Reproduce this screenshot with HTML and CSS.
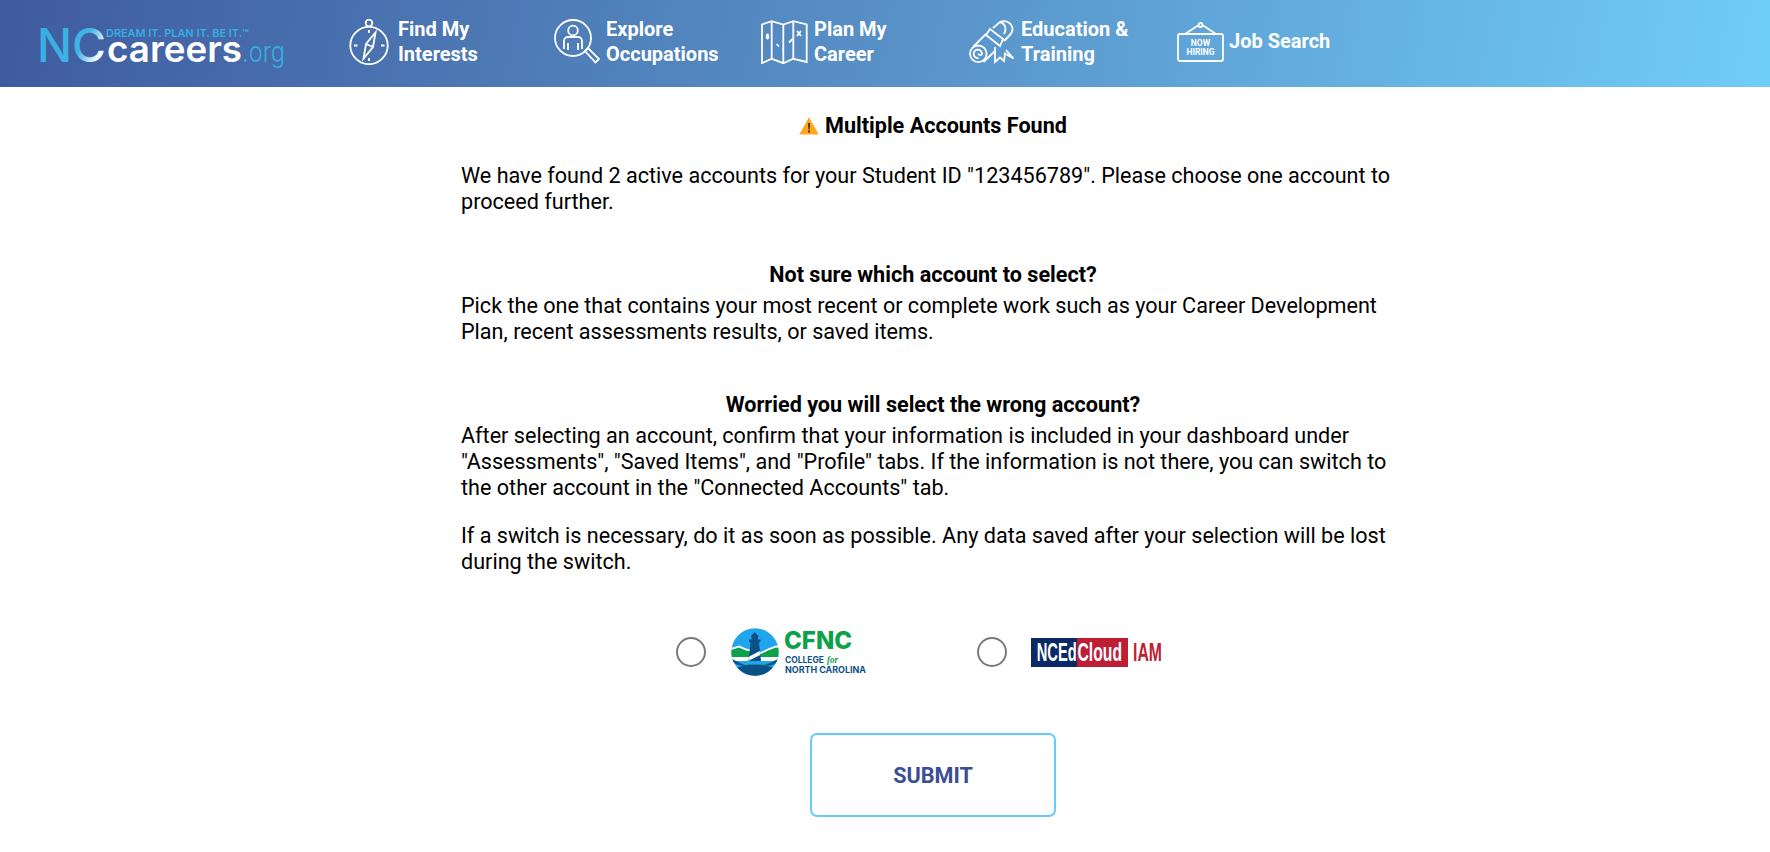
FILE: index.html
```html
<!DOCTYPE html>
<html lang="en">
<head>
<meta charset="utf-8">
<title>NCcareers.org</title>
<link rel="stylesheet" href="styles.css">
</head>
<body>
<header class="topbar">
  <a class="logo" href="#">
    <svg width="245" height="42" viewBox="0 0 245 42">
      <defs>
        <linearGradient id="ncfill" x1="0" y1="0" x2="1" y2="0.45">
          <stop offset="0" stop-color="#35aee2"/>
          <stop offset="0.74" stop-color="#3fb3e6"/>
          <stop offset="1" stop-color="#eef8fd"/>
        </linearGradient>
      </defs>
      <text class="lg-nc" x="-3" y="33.500" textLength="69" lengthAdjust="spacingAndGlyphs" fill="url(#ncfill)">NC</text>
      <text class="lg-tag" x="66" y="8.500" textLength="143" lengthAdjust="spacingAndGlyphs">DREAM IT. PLAN IT. BE IT.™</text>
      <text class="lg-car" x="67" y="33.500" textLength="135" lengthAdjust="spacingAndGlyphs">careers</text>
      <text class="lg-org" x="202" y="33.500" textLength="43" lengthAdjust="spacingAndGlyphs">.org</text>
    </svg>
  </a>
  <nav class="nav">
    <a class="nav-item first-item" href="#">
      <svg class="ic" width="40" height="46" viewBox="0 0 40 46">
        <circle cx="20" cy="26.500" r="18.700"/><circle cx="20" cy="4" r="3.300"/>
        <path d="M26.500 13.500 24 28 14.500 39.500 17 25zM17 25l7 3"/>
        <path d="M20 11v3M20 39v3M5 26.500h3.500M32 26.500h3.500"/>
      </svg>
      <span class="nav-label">Find My<br>Interests</span>
    </a>
    <a class="nav-item second-item" href="#">
      <svg class="ic" width="46" height="46" viewBox="0 0 46 46">
        <circle cx="19" cy="19" r="18"/><circle cx="19" cy="11.500" r="4.800"/>
        <path d="M10 30V22a4 4 0 0 1 4-4h10a4 4 0 0 1 4 4v8M14 24v7M24 24v7"/>
        <path d="M31 32l3-3 11 11-3.500 3.500z"/>
      </svg>
      <span class="nav-label">Explore<br>Occupations</span>
    </a>
    <a class="nav-item" href="#">
      <svg class="ic" width="47" height="44" viewBox="0 0 47 44">
        <path d="M1 4.500 10.700 1.200 22.300 4.500 32.300 1.200 45.700 4.500V42L32.300 38.800 22.300 43.200 10.700 38.800 1 43.200z"/>
        <path d="M10.700 1.200V38.800M22.300 4.500V43.200M32.300 1.200V38.800"/>
        <ellipse class="solid" cx="6.500" cy="16.500" rx="1.700" ry="3"/>
        <path d="M15.700 24 18 26.500M21.500 29h1.500M28 22.500 31.500 19M36 11l4 5M40 11l-4 5"/>
      </svg>
      <span class="nav-label">Plan My<br>Career</span>
    </a>
    <a class="nav-item" href="#">
      <svg class="ic" width="46" height="44" viewBox="0 0 46 44">
        <circle cx="9.300" cy="33.800" r="8.300"/>
        <path d="M9.500 38a4.200 4.200 0 1 1 3.500-4.500c0 2-3.500 2.200-3.800 0"/>
        <path d="M4 27 17 14M14.500 42 26 31"/>
        <path d="M17 15 21 9l13 10-3 7zM24 8 31 2C36 0 42 2 43.500 8 44 12 42 14 40 16L35 21M31 2C36 3 38 9 35 14"/>
        <path d="M26 27V42L31 37.500 35 41 36 33.500 44.500 38.500 37 30"/>
      </svg>
      <span class="nav-label">Education &amp;<br>Training</span>
    </a>
    <a class="nav-item" href="#">
      <svg class="ic hire" width="47" height="40" viewBox="0 0 47 40">
        <rect x="1" y="12" width="45" height="27" rx="2"/>
        <path d="M8 12 21 3.500M39 12 26 3.500"/><circle cx="23.500" cy="3" r="2"/>
        <text class="hire-t" x="23.500" y="24">NOW</text>
        <text class="hire-t" x="23.500" y="33">HIRING</text>
      </svg>
      <span class="nav-label">Job Search</span>
    </a>
  </nav>
</header>

<main class="content">
  <h1 class="title">
    <svg class="warn" width="20" height="18" viewBox="0 0 20 18"><path d="M10 0.500 19.800 17.500H0.200z" fill="#ffa51f"/><path d="M9.100 6h1.800l-.3 6.500H9.400zM9.100 13.500h1.800v1.900H9.100z" fill="#30210a"/></svg>
    Multiple Accounts Found
  </h1>
  <p class="para first">We have found 2 active accounts for your Student ID "123456789". Please choose one account to proceed further.</p>

  <h2 class="sub">Not sure which account to select?</h2>
  <p class="para">Pick the one that contains your most recent or complete work such as your Career Development Plan, recent assessments results, or saved items.</p>

  <h2 class="sub">Worried you will select the wrong account?</h2>
  <p class="para">After selecting an account, confirm that your information is included in your dashboard under "Assessments", "Saved Items", and "Profile" tabs. If the information is not there, you can switch to the other account in the "Connected Accounts" tab.</p>
  <p class="para gap">If a switch is necessary, do it as soon as possible. Any data saved after your selection will be lost during the switch.</p>

  <form class="choose">
    <div class="options">
      <label class="option opt-a">
        <input class="radio" type="radio" name="acct">
        <svg width="136" height="48" viewBox="0 0 136 48">
          <defs><clipPath id="disc"><circle cx="24" cy="24" r="23.700"/></clipPath></defs>
          <g clip-path="url(#disc)">
            <rect width="48" height="48" fill="#1fa5ee"/>
            <path d="M0 20 8 17.500 15 20.500 30 24 37 20.500 45 17.500 48 18V33H0z" fill="#fff"/>
            <path d="M0 22 8 19.500 15 22.500 30 26 37 22.500 45 19.500 48 20V29H0z" fill="#0da14b"/>
            <path d="M0 31q7 5 14 5.500 10 1 20-.5 8-1 14-5v3q-12 4-24 4T0 34z" fill="#0da14b"/>
            <path d="M1 31q10 5 14 7-8 0-12-3z" fill="#0b5186"/>
            <path d="M47 31q-10 5-14 7 8 0 12-3z" fill="#0b5186"/>
            <path d="M0 42q24-11 48 0v6H0z" fill="#0b5186"/>
            <path d="M19.500 14h8.500L30 33H17.500z" fill="#0b5186"/>
            <path d="M18.200 28.500 28.700 23 29.200 27 18 32.500z" fill="#fff"/>
            <path d="M18 11.500h11.500V14H18zM20.500 8.500H27v3h-6.500zM19.500 8.500 23.700 4 28 8.500z" fill="#0b5186"/>
          </g>
          <text class="cf-big" x="53" y="21">CFNC</text>
          <text class="cf-sm" x="54" y="35" textLength="39" lengthAdjust="spacingAndGlyphs">COLLEGE</text>
          <text class="cf-for" x="96" y="35" textLength="11" lengthAdjust="spacingAndGlyphs">for</text>
          <text class="cf-sm" x="54" y="45" textLength="81" lengthAdjust="spacingAndGlyphs">NORTH CAROLINA</text>
        </svg>
      </label>
      <label class="option opt-b">
        <input class="radio" type="radio" name="acct">
        <svg class="nced" width="131" height="29" viewBox="0 0 131 29">
          <rect width="46" height="29" fill="#0a2a66"/>
          <rect x="46" width="51" height="29" fill="#bd1e35"/>
          <text class="nc-t" x="5.700" y="22.700" textLength="40" lengthAdjust="spacingAndGlyphs">NCEd</text>
          <text class="nc-t" x="46.500" y="22.700" textLength="44.500" lengthAdjust="spacingAndGlyphs">Cloud</text>
          <text class="nc-t red" x="102" y="22.700" textLength="29" lengthAdjust="spacingAndGlyphs">IAM</text>
        </svg>
      </label>
    </div>
    <button class="submit" type="button">SUBMIT</button>
  </form>
</main>
</body>
</html>
```
FILE: styles.css
```css
* { box-sizing: border-box; }
html, body { margin: 0; padding: 0; }
body {
  background: #fff;
  color: #000;
  font-family: Roboto, "Liberation Sans", sans-serif;
  font-size: 21.600px;
  line-height: 26px;
  overflow: hidden;
}
.topbar {
  display: flex;
  align-items: center;
  height: 87px;
  padding: 0 0 4px 40px;
  background: linear-gradient(100deg, #3f5b9e 0%, #5a96cb 55%, #70cdf8 100%);
}
.logo { display: block; width: 245px; height: 42px; margin: 0 64px 0 0; position: relative; top: 7px; }
.logo svg { display: block; overflow: visible; }
.lg-nc { font-family: Inter, sans-serif; font-size: 47px; font-weight: 500; }
.lg-tag { font-family: Inter, sans-serif; font-size: 11px; font-weight: 600; fill: #35aee2; }
.lg-car { font-family: Inter, sans-serif; font-size: 36px; font-weight: 600; fill: #fff; }
.lg-org { font-family: Inter, sans-serif; font-size: 28px; font-weight: 300; fill: #35aee2; }
.nav { display: flex; }
.nav-item {
  display: flex;
  align-items: center;
  width: 208px;
  color: #fff;
  text-decoration: none;
}
.first-item { width: 205px; }
.second-item { width: 207px; }
.ic { flex: none; fill: none; stroke: #fff; stroke-width: 1.800; margin-right: 6px; }
.first-item .ic { margin-right: 9px; }
.ic .solid { fill: #fff; stroke: none; }
.hire { margin-right: 5px; }
.hire-t { font-family: Roboto, sans-serif; font-size: 8.500px; font-weight: 700; fill: #fff; stroke: none; text-anchor: middle; }
.nav-label { font-size: 20px; font-weight: 700; line-height: 25px; }
.content { width: 944px; margin-left: 461px; }
.title {
  display: flex;
  justify-content: center;
  align-items: center;
  gap: 6px;
  margin: 0;
  padding-top: 26px;
  font-size: 21.600px;
  line-height: 26px;
  font-weight: 700;
}
.sub { margin: 47px 0 5px; font-size: 21.600px; line-height: 26px; font-weight: 700; text-align: center; }
.para { margin: 0; }
.para.first { margin-top: 24px; }
.para.gap { margin-top: 22px; }
.choose { display: flex; flex-direction: column; align-items: center; }
.options { display: flex; align-self: flex-start; margin: 53px 0 0 215px; height: 48px; }
.option { display: flex; align-items: center; }
.opt-a { width: 301px; }
.radio {
  appearance: none;
  flex: none;
  width: 30px;
  height: 30px;
  margin: 0 25px 0 0;
  border: 2px solid #7a7a7a;
  border-radius: 50%;
  background: #fff;
}
.cf-big { font-family: Inter, sans-serif; font-size: 24px; font-weight: 800; fill: #0da14b; }
.cf-sm { font-family: Inter, sans-serif; font-size: 8.600px; font-weight: 700; fill: #0b5186; }
.cf-for { font-family: "Liberation Serif", serif; font-size: 10px; font-style: italic; font-weight: 700; fill: #0da14b; }
.nced { margin-left: -1px; }
.nc-t { font-family: "Liberation Sans", sans-serif; font-size: 25px; font-weight: 700; fill: #fff; }
.nc-t.red { fill: #bd1e35; }
.submit {
  width: 246px;
  height: 84px;
  margin-top: 57px;
  background: #fff;
  border: 2px solid #66ccff;
  border-radius: 7px;
  color: #3b4d94;
  font-family: Roboto, sans-serif;
  font-size: 21.600px;
  font-weight: 700;
}
```
